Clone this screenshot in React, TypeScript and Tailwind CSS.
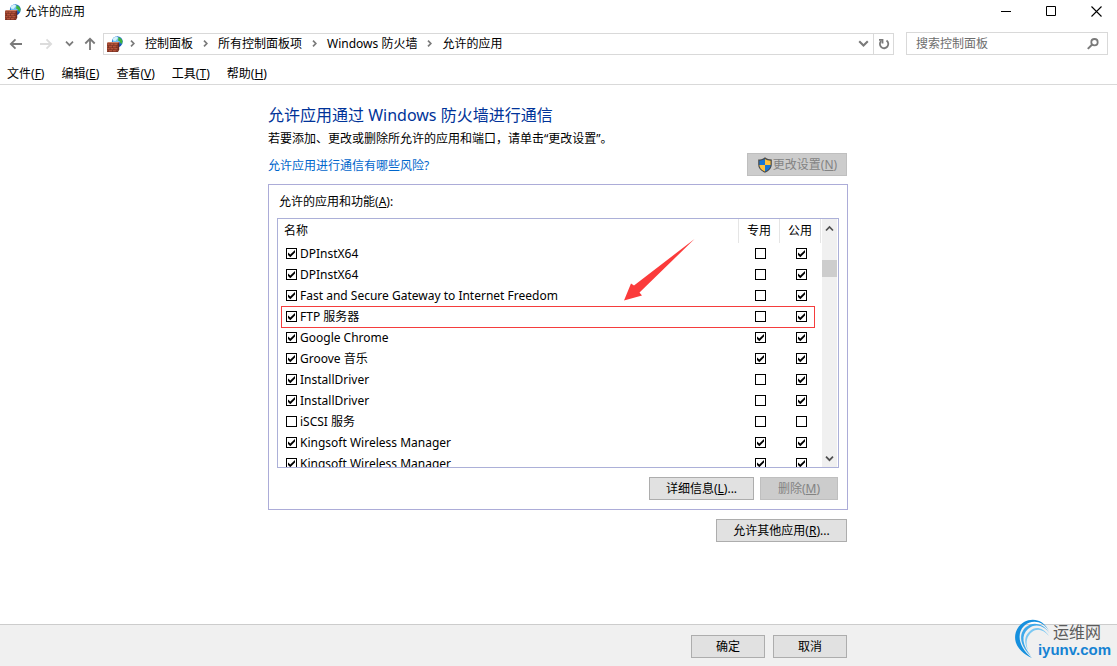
import React from "react";

type AppRow = { name: string; enabled: boolean; priv: boolean; pub: boolean };

const rows: AppRow[] = [
  { name: "DPInstX64", enabled: true, priv: false, pub: true },
  { name: "DPInstX64", enabled: true, priv: false, pub: true },
  { name: "Fast and Secure Gateway to Internet Freedom", enabled: true, priv: false, pub: true },
  { name: "FTP 服务器", enabled: true, priv: false, pub: true },
  { name: "Google Chrome", enabled: true, priv: true, pub: true },
  { name: "Groove 音乐", enabled: true, priv: true, pub: true },
  { name: "InstallDriver", enabled: true, priv: false, pub: true },
  { name: "InstallDriver", enabled: true, priv: false, pub: true },
  { name: "iSCSI 服务", enabled: false, priv: false, pub: false },
  { name: "Kingsoft Wireless Manager", enabled: true, priv: true, pub: true },
  { name: "Kingsoft Wireless Manager", enabled: true, priv: true, pub: true },
];

const menus = [
  ["文件", "F"],
  ["编辑", "E"],
  ["查看", "V"],
  ["工具", "T"],
  ["帮助", "H"],
];

const crumbs = ["控制面板", "所有控制面板项", "Windows 防火墙", "允许的应用"];

function FirewallIcon() {
  return (
    <svg width="16" height="16" viewBox="0 0 16 16" className="shrink-0" aria-hidden="true">
      <circle cx="10.3" cy="5.6" r="5.4" fill="#1f6fd0" />
      <circle cx="9.3" cy="4.4" r="3.6" fill="#6fc0ee" />
      <path d="M7 1.6 10 .5l1 1.6-1.3 1.5L8.4 5 6.2 4.6 5.6 3.2z" fill="#d5f2fb" />
      <path d="M11.2 1 14 2.4l1.5 2.4-.4 3.200-1.600-1-.7-1.800-1.900-.7.5-1.600z" fill="#3fb53a" />
      <path d="M12 8.6l2.400-.3-1 1.900-1.400.6z" fill="#1a4fb0" />
      <path d="M0 7.2 1.200 6h11v7.800L11 16H0z" fill="#6d2a1c" />
      <path d="M0 7.2 1.200 6h11L11 7.200z" fill="#cf8064" />
      <path
        d="M.3 7.5h2.5v1.7H.3zM3.4 7.5h3.2v1.7H3.4zM7.2 7.5h3.3v1.7H7.2zM.3 9.7h1v1.7h-1zM1.9 9.7h3.2v1.7H1.9zM5.7 9.7h3.2v1.7H5.7zM9.5 9.7h1v1.7h-1zM.3 11.9h2.5v1.6H.3zM3.4 11.9h3.2v1.6H3.4zM7.2 11.9h3.3v1.6H7.2zM.3 14h1v1.6h-1zM1.9 14h3.2v1.6H1.9zM5.7 14h3.2v1.6H5.7zM9.5 14h1v1.6h-1z"
        fill="#b5533a"
      />
    </svg>
  );
}

function ShieldIcon() {
  return (
    <svg width="16" height="16" viewBox="0 0 16 16" className="shrink-0" aria-hidden="true">
      <path d="M8 .3C6.200 1.700 3.800 2.500 1.200 2.600v5c0 3.700 2.600 6.500 6.800 8.200 4.200-1.700 6.800-4.500 6.800-8.200v-5C12.200 2.500 9.800 1.700 8 .3z" fill="#4a4a4a" />
      <path d="M8 1.900v6H2.400V3.700C4.500 3.500 6.500 2.900 8 1.900z" fill="#1976d2" />
      <path d="M8 1.900v6h5.600V3.700C11.500 3.500 9.500 2.900 8 1.900z" fill="#ffc23d" />
      <path d="M2.400 7.900H8v6.600c-3.400-1.500-5.600-3.700-5.600-6.600z" fill="#ffc23d" />
      <path d="M13.600 7.900H8v6.600c3.400-1.500 5.600-3.700 5.600-6.600z" fill="#1976d2" />
    </svg>
  );
}

function Chevron({ dir, size = 9, color = "#7a7a7a" }: { dir: "up" | "down" | "right"; size?: number; color?: string }) {
  const d = { up: "M1 6.500 4.500 3 8 6.500", down: "M1 2.700 4.500 6.200 8 2.700", right: "M3 1.700 5.800 4.500 3 7.300" }[dir];
  return (
    <svg width={size} height={size} viewBox="0 0 9 9" fill="none" stroke={color} strokeWidth="1.700" className="shrink-0" aria-hidden="true">
      <path d={d} />
    </svg>
  );
}

function Arrow({ path, color }: { path: string; color: string }) {
  return (
    <svg width="14" height="14" viewBox="0 0 14 14" fill="none" stroke={color} strokeWidth="1.800" aria-hidden="true">
      <path d={path} />
    </svg>
  );
}

function Tick({ label, on, id }: { label?: string; on: boolean; id?: string }) {
  return (
    <span className="inline-grid shrink-0">
      <input
        id={id}
        type="checkbox"
        aria-label={label}
        defaultChecked={on}
        className="peer col-start-1 row-start-1 size-[11px] appearance-none border border-black bg-white"
      />
      <svg
        width="11"
        height="11"
        viewBox="0 0 11 11"
        className="pointer-events-none invisible col-start-1 row-start-1 peer-checked:visible"
        aria-hidden="true"
      >
        <path d="M2 4.500v2.600L4.300 9.200 9 4.500V2L4.300 6.600z" fill="#000" />
      </svg>
    </span>
  );
}

function Key({ k }: { k: string }) {
  return (
    <>
      (<span className="underline underline-offset-1">{k}</span>)
    </>
  );
}

const button = "flex h-[23px] items-center justify-center border border-[#adadad] bg-[#e1e1e1] text-black";
const buttonOff = "flex h-[23px] items-center justify-center border border-[#bfbfbf] bg-[#cccccc] text-[#838383]";

export default function App() {
  return (
    <div className="relative flex min-h-screen flex-col bg-white font-['Noto_Sans','Noto_Sans_CJK_SC',sans-serif] text-xs leading-4 text-black">
      <header className="border-b border-[#d9d9d9]">
        <div className="flex h-[23px] items-center justify-between pr-px pl-[5px]">
          <div className="flex items-center gap-1">
            <FirewallIcon />
            <h1>允许的应用</h1>
          </div>
          <div className="flex gap-[5px]">
            <button aria-label="最小化" className="flex h-[23px] w-10 items-center justify-center">
              <svg width="11" height="11" stroke="#000" fill="none" aria-hidden="true"><path d="M0 5.500h10" /></svg>
            </button>
            <button aria-label="最大化" className="flex h-[23px] w-10 items-center justify-center">
              <svg width="11" height="11" stroke="#000" fill="none" aria-hidden="true"><path d="M.5.5h9v9h-9z" /></svg>
            </button>
            <button aria-label="关闭" className="flex h-[23px] w-10 items-center justify-center">
              <svg width="11" height="11" stroke="#000" fill="none" strokeWidth="1.100" aria-hidden="true"><path d="M.5.5l10 10M10.500.5l-10 10" /></svg>
            </button>
          </div>
        </div>

        <nav className="flex items-center px-[9px] pt-[9px]">
          <div className="flex w-[94px] items-center">
            <button aria-label="后退" className="mr-4"><Arrow path="M13 7H2M6.500 2.300 1.800 7l4.700 4.700" color="#7a7a7a" /></button>
            <button aria-label="前进" className="mr-3"><Arrow path="M1 7h11M7.500 2.300 12.200 7l-4.700 4.700" color="#dcdcdc" /></button>
            <button aria-label="最近位置" className="mr-[9px]"><Chevron dir="down" /></button>
            <button aria-label="上移"><Arrow path="M7 13V2M2.300 6.500 7 1.800l4.700 4.700" color="#7a7a7a" /></button>
          </div>
          <div className="flex h-[22px] min-w-0 flex-1 items-center border border-[#d9d9d9] pl-[3px]">
            <FirewallIcon />
            <ol className="ml-[5px] flex flex-1 items-center">
              {crumbs.map((c) => (
                <li key={c} className="mr-2 flex items-center gap-2">
                  <Chevron dir="right" />
                  <a href="#" className="whitespace-nowrap">{c}</a>
                </li>
              ))}
            </ol>
            <button aria-label="以前的位置" className="mr-1"><Chevron dir="down" size={11} /></button>
            <button aria-label="刷新" className="flex h-5 w-5 items-center justify-center border-l border-[#d9d9d9]">
              <svg width="12" height="12" viewBox="0 0 12 12" fill="none" stroke="#7a7a7a" strokeWidth="1.800" aria-hidden="true">
                <path d="M8.500 2.600A4.200 4.200 0 1 1 3.200 3" />
                <path d="M1 1.800h3.500v3.600" />
              </svg>
            </button>
          </div>
          <label className="ml-3 flex h-[23px] w-[202px] items-center border border-[#d9d9d9] pr-2 pl-[9px]">
            <input
              type="text"
              aria-label="搜索控制面板"
              placeholder="搜索控制面板"
              className="min-w-0 flex-1 bg-transparent outline-none placeholder:text-[#6d6d6d]"
            />
            <svg width="12" height="12" viewBox="0 0 12 12" fill="none" stroke="#7a7a7a" strokeWidth="1.800" aria-hidden="true">
              <circle cx="7.500" cy="4.200" r="3.200" />
              <path d="M5.200 6.500.8 10.900" strokeWidth="2" />
            </svg>
          </label>
        </nav>

        <div className="flex gap-[17px] pt-[11px] pb-0.5 pl-[7px]">
          {menus.map(([t, k]) => (
            <button key={k}>
              {t}
              <Key k={k} />
            </button>
          ))}
        </div>
      </header>

      <main className="mx-auto w-full max-w-[581px] flex-1 pt-[19px] pr-px">
        <h2 className="text-base leading-[22px] text-[#003399]">允许应用通过 Windows 防火墙进行通信</h2>
        <p className="mt-[5px]">若要添加、更改或删除所允许的应用和端口，请单击“更改设置”。</p>
        <div className="mt-1.5 flex items-end justify-between pr-px">
          <a href="#" className="pb-0.5 text-[#0066cc]">允许应用进行通信有哪些风险?</a>
          <button disabled className={`${buttonOff} w-[100px]`}>
            <ShieldIcon />
            <span>更改设置<Key k="N" /></span>
          </button>
        </div>

        <section className="mt-2 border border-[#acacd8] px-2 py-[9px]">
          <h3 className="pl-0.5">允许的应用和功能<Key k="A" />:</h3>
          <div className="relative mt-2 flex h-[250px] overflow-hidden border border-[#acb0d8]">
            <div className="min-w-0 flex-1 pr-px">
              <table className="w-full table-fixed border-collapse">
                <thead>
                  <tr className="h-6">
                    <th className="border-r border-[#e5e5e5] p-0 pl-1.5 text-left font-normal">名称</th>
                    <th className="w-[41px] border-r border-[#e5e5e5] p-0 text-center font-normal">专用</th>
                    <th className="w-[41px] border-r border-[#e5e5e5] p-0 text-center font-normal">公用</th>
                  </tr>
                </thead>
                <tbody>
                  {rows.map((r, i) => (
                    <tr key={i} className="h-[21px]">
                      <td className="p-0 pl-2">
                        <div className="flex h-[21px] items-center gap-[3px]">
                          <Tick id={`app-${i}`} on={r.enabled} />
                          <label htmlFor={`app-${i}`}>{r.name}</label>
                        </div>
                      </td>
                      <td className="p-0">
                        <div className="flex h-[21px] items-center justify-center pl-0.5">
                          <Tick label={`${r.name} 专用`} on={r.priv} />
                        </div>
                      </td>
                      <td className="p-0">
                        <div className="flex h-[21px] items-center justify-center pl-0.5">
                          <Tick label={`${r.name} 公用`} on={r.pub} />
                        </div>
                      </td>
                    </tr>
                  ))}
                </tbody>
              </table>
            </div>
            <div className="mr-px flex w-[15px] flex-col items-center bg-[#f0f0f0]">
              <button aria-label="向上滚动" className="flex h-[18px] items-center"><Chevron dir="up" color="#505050" /></button>
              <div className="flex w-full flex-1 flex-col pt-[23px]">
                <div className="h-[17px] bg-[#cdcdcd]" />
              </div>
              <button aria-label="向下滚动" className="flex h-[18px] items-center"><Chevron dir="down" color="#505050" /></button>
            </div>
            <div className="pointer-events-none absolute top-[87px] right-[23px] left-[3px] h-[22px] border border-[#f53d3d]" />
            <svg width="72" height="64" viewBox="0 0 72 64" className="pointer-events-none absolute top-[19px] right-[143px]" aria-hidden="true">
              <path d="M71.500 1 11 47.500 8 45.500 1 62.500 19 57.500 16.500 54.500z" fill="#fb3b3b" />
            </svg>
          </div>
          <div className="mt-[9px] flex justify-end gap-1.5 pr-px">
            <button className={`${button} w-[105px]`}><span>详细信息<Key k="L" />...</span></button>
            <button disabled className={`${buttonOff} w-[78px]`}><span>删除<Key k="M" /></span></button>
          </div>
        </section>

        <div className="mt-[9px] flex justify-end pr-px">
          <button className={`${button} w-[131px]`}><span>允许其他应用<Key k="R" />...</span></button>
        </div>
      </main>

      <footer className="border-t border-[#cccccc] bg-[#f0f0f0]">
        <div className="mx-auto flex w-full max-w-[581px] justify-end gap-2 pt-2.5 pr-0.5 pb-2">
          <button className={`${button} w-[74px]`}>确定</button>
          <button className={`${button} w-[74px]`}>取消</button>
        </div>
      </footer>

      <div className="pointer-events-none absolute right-[6px] bottom-1.5 flex h-[42px] w-[97px] flex-col items-end">
        <svg width="38" height="42" viewBox="0 0 38 42" className="absolute top-0 left-0" aria-hidden="true">
          <path d="M35 13C30 2 19-1 10 4-3 12-3 31 18 40 5 30 2 16 10 8 18 1 29 3 35 13z" fill="#1690de" />
          <path d="M36 16C30 5 19 3 12 9 4 16 6 28 17 38 8 27 7 17 14 11 21 5 30 7 36 16z" fill="#3fa9ea" />
          <path d="M35 18C29 9 21 8 16 13 10 18 10 25 14 32 11 24 13 18 18 14 23 10 29 11 35 18z" fill="#7cc8f2" />
        </svg>
        <span className="mr-2.5 pt-1.5 text-base leading-4 text-[#5c5c5c]">运维网</span>
        <span className="font-['Liberation_Sans',sans-serif] text-[15px] leading-5 font-bold text-[#1583d3]">iyunv.com</span>
      </div>
    </div>
  );
}
